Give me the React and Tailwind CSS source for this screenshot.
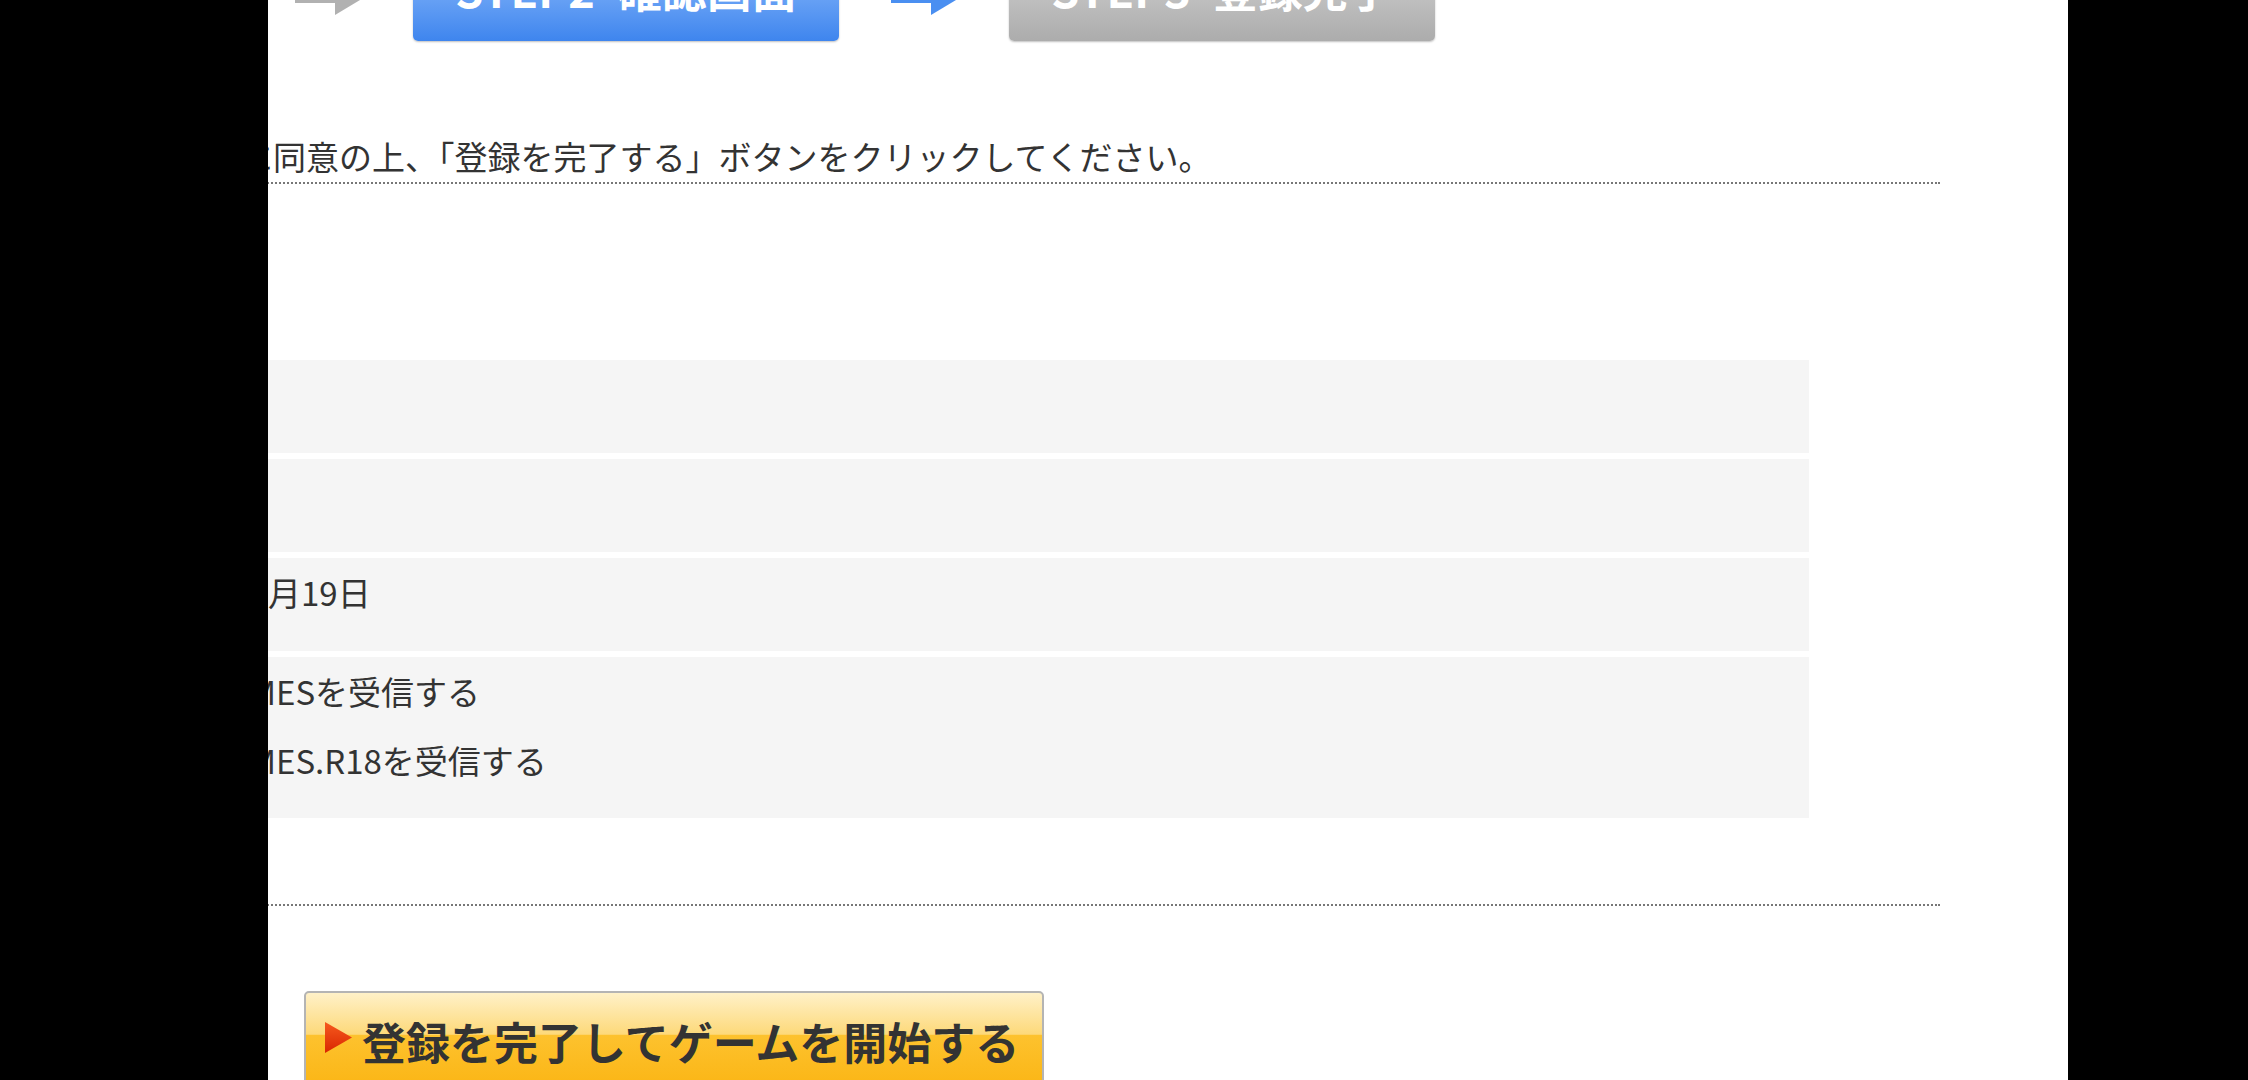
import React from 'react';

const FONT = "font-['Noto_Sans_CJK_JP','Noto_Sans',sans-serif]";

function StepArrow({ color }) {
  return (
    <div className="w-[170px] shrink-0">
      <svg width="90" height="60" viewBox="0 0 90 60" className="ml-[52px] block">
        <rect x="0" y="12" width="40" height="36" fill={color} />
        <polygon points="40,0 90,30 40,60" fill={color} />
      </svg>
    </div>
  );
}

function StepButton({ step, title, active }) {
  return (
    <div
      className={
        active
          ? 'mt-[2px] h-[84px] w-[426px] shrink-0 rounded-[5px] bg-linear-to-b from-[#8dbbfa] to-[#3e85ee] shadow-[0_1px_2px_rgba(0,0,0,0.25)] flex justify-center pt-[10px]'
          : 'mt-[2px] h-[84px] w-[426px] shrink-0 rounded-[5px] bg-linear-to-b from-[#d2d2d2] to-[#acacac] shadow-[0_1px_2px_rgba(0,0,0,0.25)] flex justify-center pt-[10px]'
      }
    >
      <span className="text-[45px] leading-[44px] font-bold text-white whitespace-nowrap">
        {step}
        <span className="ml-[22px]">{title}</span>
      </span>
    </div>
  );
}

export default function App() {
  return (
    <div className={`flex h-[1080px] w-full overflow-hidden bg-black ${FONT}`}>
      <div className="w-[268px] shrink-0 bg-black" />

      <div className="w-[1800px] shrink-0 overflow-hidden bg-white">
        {/* Steps */}
        <div className="-mt-[45px] -ml-[451px] flex items-start">
          <StepButton step="STEP1" title="情報入力" active={false} />
          <StepArrow color="#b1b1b1" />
          <StepButton step="STEP2" title="確認画面" active />
          <StepArrow color="#4a8ff1" />
          <StepButton step="STEP3" title="登録完了" active={false} />
        </div>

        <div className="-ml-[200px] w-[1872px]">
          {/* Intro */}
          <div className="mt-[91px] border-b-2 border-dotted border-[#777] pb-[2px] pl-[40px]">
            <p className="text-[33px] leading-[48px] text-[#333] whitespace-nowrap">
              利用規約に同意の上、「登録を完了する」ボタンをクリックしてください。
            </p>
          </div>

          {/* Confirm table */}
          <div className="mt-[176px] flex w-[1741px] flex-col gap-[6px] text-[33px] text-[#333]">
            <div className="h-[93px] bg-[#f5f5f5]" />
            <div className="h-[93px] bg-[#f5f5f5]" />
            <div className="h-[93px] bg-[#f5f5f5] pt-[14px] leading-[40px] whitespace-nowrap overflow-hidden">
              <span className="inline-block w-[200px] text-right">1990年1</span>
              <span>月19日</span>
            </div>
            <div className="h-[161px] bg-[#f5f5f5] pt-[14px] flex flex-col gap-[29px] leading-[40px] whitespace-nowrap overflow-hidden">
              <div>
                <span className="inline-block w-[208px] text-right">DMM GAM</span>
                <span>ESを受信する</span>
              </div>
              <div>
                <span className="inline-block w-[208px] text-right">DMM GAM</span>
                <span>ES.R18を受信する</span>
              </div>
            </div>
          </div>

          <div className="mt-[86px] border-b-2 border-dotted border-[#777]" />

          {/* Submit */}
          <button className="mt-[85px] ml-[236px] flex h-[100px] w-[740px] items-start rounded-[5px] border-2 border-[#b4b4b4] bg-[linear-gradient(to_bottom,#fff1c8_0%,#fdd97a_43%,#fdc22e_44%,#fbb514_100%)] pl-[19px] pt-[20px]">
            <svg width="27" height="31" viewBox="0 0 27 31" className="mt-[9px] block shrink-0">
              <defs>
                <linearGradient id="tri" x1="0" y1="0" x2="0" y2="1">
                  <stop offset="0" stopColor="#f65a1e" />
                  <stop offset="1" stopColor="#d92600" />
                </linearGradient>
              </defs>
              <polygon points="0,0 27,15.5 0,31" fill="url(#tri)" />
            </svg>
            <span className="ml-[10px] text-[44px] leading-[56px] font-bold text-[#333] whitespace-nowrap">
              登録を完了してゲームを開始する
            </span>
          </button>
        </div>
      </div>

      <div className="flex-1 bg-black" />
    </div>
  );
}
